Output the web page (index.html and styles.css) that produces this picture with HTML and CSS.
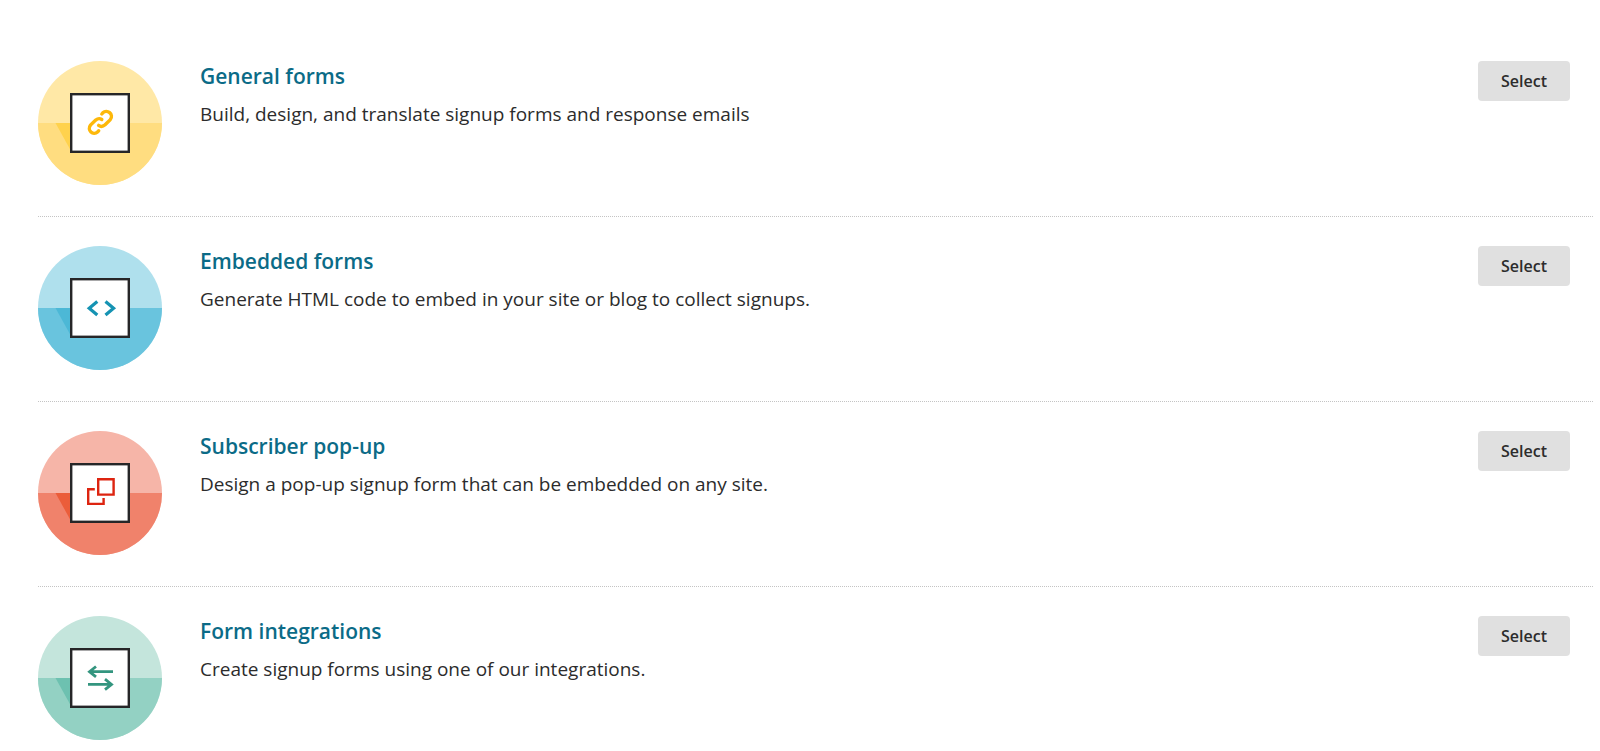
FILE: index.html
```html
<!DOCTYPE html>
<html lang="en">
<head>
<meta charset="utf-8">
<title>Signup forms</title>
<link rel="stylesheet" href="styles.css">
</head>
<body>
<main>
<ul class="form-list">
  <li class="form-row">
    <svg class="badge general" viewBox="0 0 124 124" aria-hidden="true">
      <circle class="top" cx="62" cy="62" r="62"/>
      <path class="bottom" d="M0 62a62 62 0 0 0 124 0z"/>
      <path class="shade" d="M17.5 62H33V90z"/>
      <rect class="box" x="33.2" y="33.2" width="57.6" height="57.6"/>
      <path class="glyph link" d="M63.800 53l1-1.200c4.200-4.200 11.500 1.500 7.500 6.800l-5.200 5.200c-2 1.800-4.600 2-6.500.6M60.700 69.800l-1.200 1.200c-4.200 4-11-1.800-7-6.900l5.200-5c2-1.700 4.300-1.800 6.100-.6"/>
    </svg>
    <div class="copy">
      <h2><a href="#general">General forms</a></h2>
      <p>Build, design, and translate signup forms and response emails</p>
    </div>
    <button type="button">Select</button>
  </li>
  <li class="form-row">
    <svg class="badge embedded" viewBox="0 0 124 124" aria-hidden="true">
      <circle class="top" cx="62" cy="62" r="62"/>
      <path class="bottom" d="M0 62a62 62 0 0 0 124 0z"/>
      <path class="shade" d="M17.5 62H33V90z"/>
      <rect class="box" x="33.2" y="33.2" width="57.6" height="57.6"/>
      <path class="glyph" d="M59.300 55.500l-8.100 6.800 8.100 6.800M67.500 55.500l8.100 6.800-8.100 6.800"/>
    </svg>
    <div class="copy">
      <h2><a href="#embedded">Embedded forms</a></h2>
      <p>Generate HTML code to embed in your site or blog to collect signups.</p>
    </div>
    <button type="button">Select</button>
  </li>
  <li class="form-row">
    <svg class="badge popup" viewBox="0 0 124 124" aria-hidden="true">
      <circle class="top" cx="62" cy="62" r="62"/>
      <path class="bottom" d="M0 62a62 62 0 0 0 124 0z"/>
      <path class="shade" d="M17.5 62H33V90z"/>
      <rect class="box" x="33.2" y="33.2" width="57.6" height="57.6"/>
      <path class="glyph windows" d="M60.200 48.200h15.400v15.400H60.200zM56.800 58.200h-6.600v14.700h15.400v-6"/>
    </svg>
    <div class="copy">
      <h2><a href="#popup">Subscriber pop-up</a></h2>
      <p>Design a pop-up signup form that can be embedded on any site.</p>
    </div>
    <button type="button">Select</button>
  </li>
  <li class="form-row">
    <svg class="badge integrations" viewBox="0 0 124 124" aria-hidden="true">
      <circle class="top" cx="62" cy="62" r="62"/>
      <path class="bottom" d="M0 62a62 62 0 0 0 124 0z"/>
      <path class="shade" d="M17.5 62H33V90z"/>
      <rect class="box" x="33.2" y="33.2" width="57.6" height="57.6"/>
      <path class="glyph arrows" d="M75 55.700H51.500M58 50.500l-6.500 5.200 6.500 5.200M50 68.400h23.500M67 63.200l6.500 5.200-6.500 5.200"/>
    </svg>
    <div class="copy">
      <h2><a href="#integrations">Form integrations</a></h2>
      <p>Create signup forms using one of our integrations.</p>
    </div>
    <button type="button">Select</button>
  </li>
</ul>
</main>
</body>
</html>
```
FILE: styles.css
```css
body {
  margin: 0;
  background: #fff;
  color: #2c2c2c;
  font-family: "Open Sans", sans-serif;
}

.form-list {
  list-style: none;
  margin: 0;
  padding: 32px 7px 0 38px;
}

.form-row {
  display: flex;
  align-items: flex-start;
  padding: 29px 23px 31px 0;
  border-bottom: 1px dotted #c4c4c4;
}

.form-row:last-child {
  border-bottom: 0;
  padding-bottom: 10px;
}

.badge {
  flex: none;
  width: 124px;
  height: 124px;
  margin-right: 38px;
}

.copy {
  flex: 1;
}

h2 {
  margin: 0 0 8px;
  font-size: 21px;
  line-height: 30px;
  font-weight: 600;
}

h2 a {
  color: #0b6b87;
  text-decoration: none;
}

p {
  margin: 0;
  font-size: 19px;
  line-height: 30px;
}

button {
  flex: none;
  padding: 8px 23px;
  border: 0;
  border-radius: 4px;
  background: #e0e0e0;
  color: #2c2c2c;
  font: 600 16px/24px "Open Sans", sans-serif;
}

.box {
  fill: #fff;
  stroke: #262628;
  stroke-width: 2.4;
}

.glyph {
  fill: none;
  stroke-width: 3.2;
}

.link {
  stroke-width: 3.4;
  stroke-linecap: round;
}

.windows {
  stroke-width: 2.4;
}

.arrows {
  stroke-width: 2.8;
}

.general .top { fill: #ffe8a6; }
.general .bottom { fill: #ffdd80; }
.general .shade { fill: #ffd24d; }
.general .glyph { stroke: #fdb80a; }

.embedded .top { fill: #afe0ed; }
.embedded .bottom { fill: #69c4de; }
.embedded .shade { fill: #4cb8d6; }
.embedded .glyph { stroke: #1593b3; }

.popup .top { fill: #f6b5a8; }
.popup .bottom { fill: #f0826b; }
.popup .shade { fill: #eb5d3a; }
.popup .glyph { stroke: #dd2410; }

.integrations .top { fill: #c4e5dc; }
.integrations .bottom { fill: #93d1c3; }
.integrations .shade { fill: #6dc1b0; }
.integrations .glyph { stroke: #33957f; }
```
